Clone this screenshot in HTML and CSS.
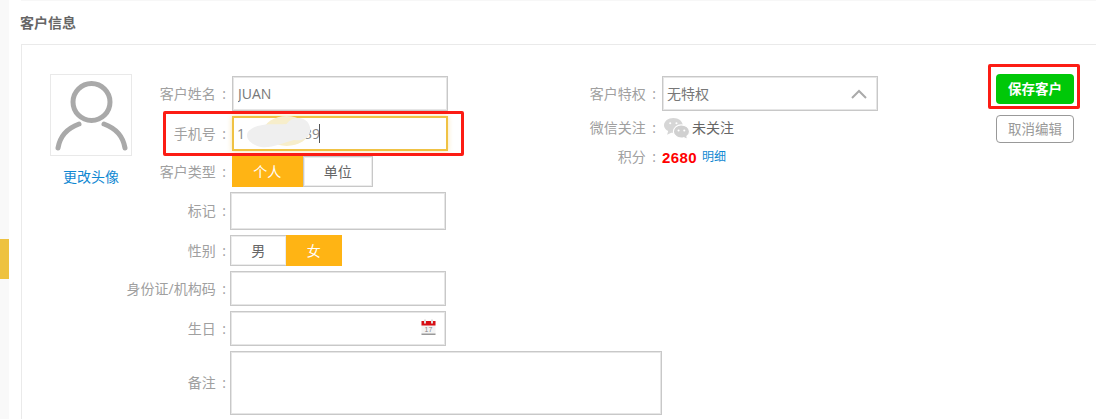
FILE: index.html
```html
<!DOCTYPE html>
<html lang="zh-CN">
<head>
<meta charset="utf-8">
<title>客户信息</title>
<link rel="stylesheet" href="styles.css">
</head>
<body>
<div class="page">
  <aside class="rail"><span class="rail-tab"></span></aside>
  <main class="main">
    <h2 class="title">客户信息</h2>
    <section class="panel">
      <div class="avatar-col">
        <div class="avatar">
          <svg width="80" height="80" viewBox="0 0 80 80" fill="none" stroke="#a9a9a9" stroke-linecap="round">
            <circle cx="40.500" cy="27" r="18.500" stroke-width="5"/>
            <path d="M28 49 C17 53 9 61 7 73" stroke-width="5"/>
            <path d="M53 49 C64 53 72 61 74 73" stroke-width="5"/>
          </svg>
        </div>
        <a class="link avatar-link">更改头像</a>
      </div>
      <div class="fields">
        <div class="row h35">
          <label class="label">客户姓名 :</label>
          <input class="input shift" value="JUAN">
        </div>
        <div class="row h35">
          <label class="label">手机号 :</label>
          <div class="input shift focus">
            <span>1</span><span class="hidden-digits"></span><span>39</span><i class="caret"></i>
            <svg class="smudge" width="68" height="36" viewBox="0 0 72 36" preserveAspectRatio="none">
              <ellipse cx="44" cy="15" rx="24" ry="15" fill="#f7eecb"/>
              <path d="M3 16 C12 6 30 9 44 8 C50 0 64 0 68 9 C72 18 64 26 52 24 C40 27 24 34 13 30 C5 27 0 22 3 16Z" fill="#efefef"/>
            </svg>
          </div>
        </div>
        <div class="row h31">
          <label class="label">客户类型 :</label>
          <div class="toggle shift wide">
            <span class="opt on">个人</span><span class="opt next">单位</span>
          </div>
        </div>
        <div class="row h38">
          <label class="label">标记 :</label>
          <input class="input">
        </div>
        <div class="row h31">
          <label class="label">性别 :</label>
          <div class="toggle">
            <span class="opt before-on">男</span><span class="opt on">女</span>
          </div>
        </div>
        <div class="row h35">
          <label class="label">身份证/机构码 :</label>
          <input class="input">
        </div>
        <div class="row h35">
          <label class="label">生日 :</label>
          <div class="input date">
            <svg class="cal" width="15" height="16" viewBox="0 0 15 16">
              <rect x="0.500" y="2" width="14" height="13.500" fill="#f4f4f4"/>
              <rect x="0.500" y="2" width="14" height="4.500" fill="#d80f14"/>
              <rect x="0.500" y="14.500" width="14" height="1.500" fill="#999"/>
              <rect x="3" y="0.500" width="2" height="4" fill="#ddd"/>
              <rect x="10" y="0.500" width="2" height="4" fill="#ddd"/>
              <text x="7.500" y="12.500" class="cal-num">17</text>
            </svg>
          </div>
        </div>
        <div class="row h64 note-row">
          <label class="label">备注 :</label>
          <textarea class="note"></textarea>
        </div>
      </div>
      <div class="extra">
        <div class="row h35">
          <span class="label short">客户特权 :</span>
          <div class="input select">
            <span>无特权</span>
            <svg width="16" height="10" viewBox="0 0 16 10" fill="none" stroke="#aaa" stroke-width="2"><path d="M1 9 L8 2 L15 9"/></svg>
          </div>
        </div>
        <div class="row wx-row">
          <span class="label short">微信关注 :</span>
          <svg class="wx" width="26" height="23" viewBox="0 0 25 22">
            <path d="M9 1 C14 1 18 4 18 8 C18 12 14 15 9 15 L7 15 L3 17 L4 13.500 C1.500 12 0 10 0 8 C0 4 4 1 9 1Z" fill="#d6d6d6"/>
            <path d="M16.500 7.500 C21 7.500 24.500 10.500 24.500 14 C24.500 16 23.500 17.500 22 18.500 L22.500 21.500 L19 19.800 C14 21 9 18 9 14 C9 10.500 12.500 7.500 16.500 7.500Z" fill="#d0d0d0" stroke="#fff" stroke-width="1"/>
            <circle cx="6" cy="6" r="1" fill="#fff"/><circle cx="12" cy="6" r="1" fill="#fff"/>
            <circle cx="14" cy="13" r="1" fill="#fff"/><circle cx="19.500" cy="13" r="1" fill="#fff"/>
          </svg>
          <span class="wx-text">未关注</span>
        </div>
        <div class="row points-row">
          <span class="label short">积分 :</span>
          <strong class="points">2680</strong>
          <a class="link small">明细</a>
        </div>
      </div>
      <div class="actions">
        <button class="btn save">保存客户</button>
        <button class="btn cancel">取消编辑</button>
      </div>
      <span class="mark mark-phone"></span>
      <span class="mark mark-save"></span>
    </section>
  </main>
</div>
</body>
</html>
```
FILE: styles.css
```css
* { box-sizing: border-box; }
html, body { margin: 0; height: 100%; overflow: hidden; background: #fff; }
body { font: 14px/1.4 "Open Sans", "Noto Sans CJK SC", sans-serif; color: #666; }
.page { display: flex; height: 419px; overflow: hidden; }
.rail { width: 9px; flex: none; background: #f9f9f9; padding-top: 239px; }
.rail-tab { display: block; height: 40px; background: #eec240; }
.main { flex: 1; margin-left: 12px; border-top: 1px solid #f7f7f7; min-width: 0; }
.title { margin: 0 0 0 -1px; height: 43px; padding-top: 12px; font-size: 14px; line-height: 20px; font-weight: 700; color: #666; }
.panel { position: relative; display: flex; align-items: flex-start; height: 500px; padding: 29px 22px 0 28px; border: 1px solid #eaeaea; border-right: 0; }
.avatar-col { width: 82px; flex: none; }
.avatar { width: 82px; height: 82px; border: 1px solid #e9e9e9; display: flex; align-items: center; justify-content: center; }
.avatar-link { display: block; text-align: center; margin-top: 11px; }
.link { color: #0f88d2; }
.fields { width: 338px; flex: none; margin-left: -22px; padding-top: 2px; display: flex; flex-direction: column; gap: 5px; }
.row { display: flex; align-items: center; }
.h35 { height: 35px; }
.h31 { height: 31px; }
.h38 { height: 38px; }
.h64 { height: 64px; }
.label { width: 120px; flex: none; display: flex; justify-content: flex-end; padding-right: 4px; color: #a0a0a0; white-space: pre; word-spacing: 3px; font-size: 14px; }
.input { width: 216px; height: 100%; flex: none; border: 1px solid #c8c8c8; box-shadow: inset 0 0 0 1px #e6e6e6; padding: 0 6px; font: inherit; color: #777; background: #fff; outline: 0; display: flex; align-items: center; }
input.shift { padding-left: 5px; }
.shift { margin-left: 2px; }
.focus { position: relative; border: 2px solid #f0c244; box-shadow: 0 0 5px rgba(240, 194, 68, .45); width: 216px; color: #888; font-size: 14px; padding-left: 3px; }
.hidden-digits { width: 59px; }
.caret { width: 1px; height: 19px; background: #555; margin-left: -1px; }
.smudge { position: absolute; left: 11px; top: -2px; }
.toggle { display: flex; height: 100%; width: 112px; }
.toggle.wide { width: 141px; }
.opt { flex: 1; display: flex; align-items: center; justify-content: center; border: 1px solid #c8c8c8; box-shadow: inset 0 0 0 1px #ececec; color: #666; }
.opt.on { background: #ffb414; border-color: #ffb414; box-shadow: none; color: #fff; }
.opt.before-on { border-right: 0; }
.date { justify-content: flex-end; padding-right: 9px; }
.cal { margin-bottom: 3px; }
.cal-num { font: 7px "Liberation Sans", sans-serif; fill: #888; text-anchor: middle; }
.note-row { width: 338px; }
.note { width: 432px; height: 64px; flex: none; border: 1px solid #c8c8c8; box-shadow: inset 0 0 0 1px #e6e6e6; resize: none; outline: 0; }
.extra { margin-left: 142px; padding-top: 2px; display: flex; flex-direction: column; }
.extra .short { width: 72px; padding-right: 6px; }
.select { justify-content: space-between; padding-left: 4px; padding-right: 10px; height: 35px; }
.select span { color: #777; }
.wx-row { margin-top: 5px; height: 24px; }
.wx { margin-left: 2px; }
.wx-text { margin-left: 2px; color: #666; }
.points-row { margin-top: 5px; height: 24px; }
.points { color: #f00; font-size: 15px; font-family: "Liberation Sans", sans-serif; letter-spacing: .4px; }
.small { font-size: 12px; margin-left: 5px; }
.actions { margin-left: auto; display: flex; flex-direction: column; gap: 11px; width: 78px; flex: none; }
.btn { width: 78px; font: inherit; padding: 0; border-radius: 4px; cursor: pointer; }
.save { height: 30px; background: #00c808; border: 0; color: #fff; font-weight: 700; font-size: 13.5px; }
.cancel { height: 28px; background: #fff; border: 1px solid #999; color: #999; font-size: 13.5px; }
.mark { position: absolute; border: 3px solid #fc1c14; border-radius: 2px; pointer-events: none; }
.mark-phone { left: 141px; top: 66px; width: 301px; height: 45px; }
.mark-save { left: 966px; top: 19px; width: 92px; height: 45px; }
```
